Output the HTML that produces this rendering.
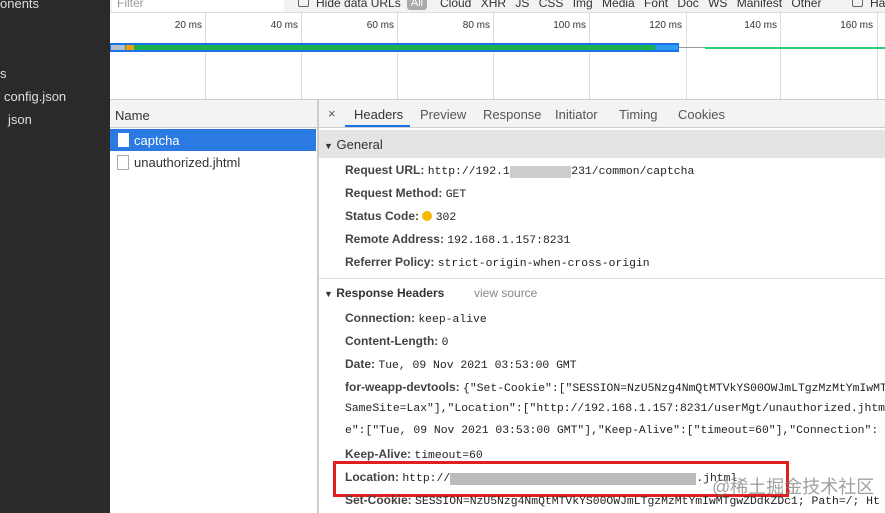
<!DOCTYPE html>
<html><head><meta charset="utf-8"><style>
*{margin:0;padding:0;box-sizing:border-box}
body{width:885px;height:513px;overflow:hidden;background:#fff;font-family:"Liberation Sans",sans-serif;font-size:12px;color:#333;position:relative}
.a{position:absolute;white-space:nowrap}
.m{font-family:"Liberation Mono",monospace;font-size:11.4px;color:#222}
.lb{color:#444;font-weight:bold;font-size:12px}
.gl{position:absolute;top:12px;height:88px;width:1px;background:#ddd}
.tl{position:absolute;top:20px;font-size:10px;color:#333;text-align:right;width:60px}
</style></head><body>
<div class="a" style="left:0;top:0;width:110px;height:513px;background:#2a2a2a"></div>
<div class="a" style="left:0;top:-4px;color:#ddd;font-size:13px">onents</div>
<div class="a" style="left:0;top:66px;color:#ddd;font-size:13px">s</div>
<div class="a" style="left:4px;top:89px;color:#ddd;font-size:13px">config.json</div>
<div class="a" style="left:8px;top:112px;color:#ddd;font-size:13px">json</div>
<div class="a" style="left:110px;top:0;width:775px;height:13px;background:#f3f3f3;border-bottom:1px solid #ddd"></div>
<div class="a" style="left:112px;top:0;width:172px;height:12px;background:#fff"></div>
<div class="a" style="left:117px;top:-4px;color:#999;font-size:12px">Filter</div>
<div class="a" style="left:298px;top:-3px;width:11px;height:10px;border:1px solid #666;border-radius:2px"></div>
<div class="a" style="left:316px;top:-4px;font-size:12px;color:#333">Hide data URLs</div>
<div class="a" style="left:407px;top:-3px;width:20px;height:13px;background:#aaa;border-radius:3px;color:#fff;font-size:11px;text-align:center">All</div>
<div class="a" style="left:440px;top:-4px;font-size:12px;color:#333;word-spacing:6px">Cloud XHR JS CSS Img Media Font Doc WS Manifest Other</div>
<div class="a" style="left:852px;top:-3px;width:11px;height:10px;border:1px solid #666;border-radius:2px"></div>
<div class="a" style="left:870px;top:-4px;font-size:12px">Ha</div>
<div class="gl" style="left:205px"></div><div class="gl" style="left:301px"></div><div class="gl" style="left:397px"></div><div class="gl" style="left:493px"></div><div class="gl" style="left:589px"></div><div class="gl" style="left:686px"></div><div class="gl" style="left:780px"></div><div class="gl" style="left:877px"></div>
<div class="tl" style="left:142px">20 ms</div><div class="tl" style="left:238px">40 ms</div><div class="tl" style="left:334px">60 ms</div><div class="tl" style="left:430px">80 ms</div><div class="tl" style="left:526px">100 ms</div><div class="tl" style="left:622px">120 ms</div><div class="tl" style="left:717px">140 ms</div><div class="tl" style="left:813px">160 ms</div>
<div class="a" style="left:110px;top:43px;width:569px;height:9px;background:#1a73e8"></div>
<div class="a" style="left:111px;top:45px;width:544px;height:5px;background:#1bb14c"></div>
<div class="a" style="left:655px;top:45px;width:23px;height:5px;background:#2e9bf0"></div>
<div class="a" style="left:111px;top:45px;width:14px;height:5px;background:#bbc"></div>
<div class="a" style="left:126px;top:45px;width:8px;height:5px;background:#f39c12"></div>
<div class="a" style="left:679px;top:47px;width:26px;height:1px;background:#999"></div>
<div class="a" style="left:705px;top:47px;width:180px;height:2px;background:#2ecc71"></div>
<div class="a" style="left:110px;top:99px;width:775px;height:1px;background:#ccc"></div>
<div class="a" style="left:110px;top:100px;width:208px;height:28px;background:#f3f3f3;border-bottom:1px solid #ccc"></div>
<div class="a" style="left:115px;top:108px;font-size:13px">Name</div>
<div class="a" style="left:110px;top:129px;width:206px;height:22px;background:#2a7ae2"></div>
<div class="a" style="left:118px;top:133px;width:11px;height:14px;background:#fff"></div>
<div class="a" style="left:134px;top:133px;color:#fff;font-size:13px">captcha</div>
<div class="a" style="left:117px;top:155px;width:12px;height:15px;border:1px solid #aaa"></div>
<div class="a" style="left:134px;top:155px;font-size:13px;color:#333">unauthorized.jhtml</div>
<div class="a" style="left:317px;top:100px;width:2px;height:413px;background:#ccc"></div>
<div class="a" style="left:319px;top:100px;width:566px;height:28px;background:#f3f3f3;border-bottom:1px solid #ccc"></div>
<div class="a" style="left:328px;top:106px;font-size:13px;color:#555">×</div>
<div class="a" style="left:354px;top:107px;font-size:13px;color:#333">Headers</div>
<div class="a" style="left:345px;top:125px;width:65px;height:2px;background:#1a73e8"></div>
<div class="a" style="left:420px;top:107px;font-size:13px;color:#555">Preview</div>
<div class="a" style="left:483px;top:107px;font-size:13px;color:#555">Response</div>
<div class="a" style="left:555px;top:107px;font-size:13px;color:#555">Initiator</div>
<div class="a" style="left:619px;top:107px;font-size:13px;color:#555">Timing</div>
<div class="a" style="left:678px;top:107px;font-size:13px;color:#555">Cookies</div>
<div class="a" style="left:319px;top:130px;width:566px;height:28px;background:#e4e4e4"></div>
<div class="a" style="left:324px;top:137px;font-size:13px;color:#333"><span style="font-size:9px">▼</span> General</div>
<div class="a" style="left:345px;top:163px"><span class="lb">Request URL:</span> <span class="m">http://192.1<span style="background:#ccc;color:#ccc">xxxxxxxxx</span>231/common/captcha</span></div>
<div class="a" style="left:345px;top:186px"><span class="lb">Request Method:</span> <span class="m">GET</span></div>
<div class="a" style="left:345px;top:209px"><span class="lb">Status Code:</span> <span style="display:inline-block;width:10px;height:10px;border-radius:5px;background:#f5b800;vertical-align:-1px"></span> <span class="m">302</span></div>
<div class="a" style="left:345px;top:232px"><span class="lb">Remote Address:</span> <span class="m">192.168.1.157:8231</span></div>
<div class="a" style="left:345px;top:255px"><span class="lb">Referrer Policy:</span> <span class="m">strict-origin-when-cross-origin</span></div>
<div class="a" style="left:319px;top:278px;width:566px;height:1px;background:#ddd"></div>
<div class="a" style="left:324px;top:286px;font-size:12px;color:#333;font-weight:bold"><span style="font-size:9px">▼</span> Response Headers</div>
<div class="a" style="left:474px;top:286px;font-size:12px;color:#888">view source</div>
<div class="a" style="left:345px;top:311px"><span class="lb">Connection:</span> <span class="m">keep-alive</span></div>
<div class="a" style="left:345px;top:334px"><span class="lb">Content-Length:</span> <span class="m">0</span></div>
<div class="a" style="left:345px;top:357px"><span class="lb">Date:</span> <span class="m">Tue, 09 Nov 2021 03:53:00 GMT</span></div>
<div class="a" style="left:345px;top:380px"><span class="lb">for-weapp-devtools:</span> <span class="m">{"Set-Cookie":["SESSION=NzU5Nzg4NmQtMTVkYS00OWJmLTgzMzMtYmIwMTgw</span></div>
<div class="a m" style="left:345px;top:403px">SameSite=Lax"],"Location":["http://192.168.1.157:8231/userMgt/unauthorized.jhtml</div>
<div class="a m" style="left:345px;top:425px">e":["Tue, 09 Nov 2021 03:53:00 GMT"],"Keep-Alive":["timeout=60"],"Connection":</div>
<div class="a" style="left:345px;top:447px"><span class="lb">Keep-Alive:</span> <span class="m">timeout=60</span></div>
<div class="a" style="left:345px;top:470px"><span class="lb">Location:</span> <span class="m">http://<span style="background:#bbb;color:#bbb">xxxxxxxxxxxxxxxxxxxxxxxxxxxxxxxxxxxx</span>.jhtml</span></div>
<div class="a" style="left:333px;top:461px;width:456px;height:36px;border:3px solid #e02020"></div>
<div class="a" style="left:345px;top:493px"><span class="lb">Set-Cookie:</span> <span class="m">SESSION=NzU5Nzg4NmQtMTVkYS00OWJmLTgzMzMtYmIwMTgwZDdkZDc1; Path=/; Ht</span></div>
<div class="a" style="left:712px;top:473px;font-size:18px;color:rgba(120,120,120,.7);font-family:'Liberation Sans','Noto Sans CJK SC',sans-serif">@稀土掘金技术社区</div>
</body></html>
